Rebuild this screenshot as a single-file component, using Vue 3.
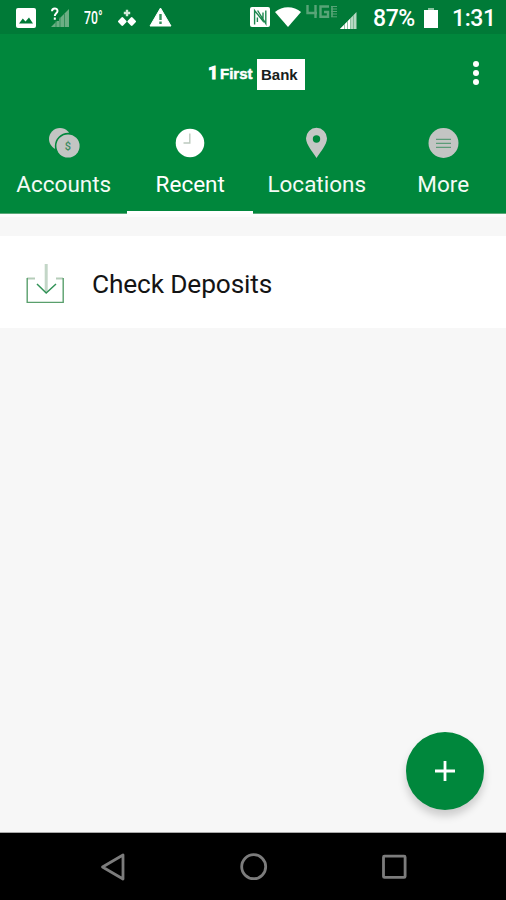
<script setup>
import { ref } from 'vue'

const tabs = [
  { id: 'accounts', label: 'Accounts' },
  { id: 'recent', label: 'Recent' },
  { id: 'locations', label: 'Locations' },
  { id: 'more', label: 'More' },
]
const active = ref('recent')
</script>

<template>
  <div class="screen">
    <div class="status">
      <div class="group">
        <svg class="picture" width="20" height="20" viewBox="0 0 20 20">
          <rect width="20" height="20" rx="2" fill="#fff" />
          <path d="M3 15.5 6.8 10.5 9.5 13.5 13 9.5 17 15.5Z" fill="#007a37" />
        </svg>
        <svg class="unknown-signal" width="20" height="21" viewBox="0 0 20 21">
          <path d="M19 2V20H1Z" fill="#6cae84" />
          <path d="M0 0H9V14H0Z" fill="#007a37" />
          <path d="M6 14V20M10 10V20M14.5 6V20" stroke="#338f5a" stroke-width="1" />
          <path d="M2 4.2C2.1 .6 7.5 .6 7.5 4C7.5 6.2 4.8 6.4 4.8 9M4.8 10.5V12.7" fill="none" stroke="#fff" stroke-width="2" />
        </svg>
        <span class="temp">70°</span>
        <svg class="clover" width="18" height="18" viewBox="0 0 18 18">
          <path d="M9 .8V7.2M5.8 4H12.2" stroke="#d4eadb" stroke-width="2.4" />
          <path d="M4.3 9.3 7.4 12.5 4.3 15.7 1.2 12.5ZM13.7 9.3 16.8 12.5 13.7 15.7 10.6 12.5Z" fill="#fff" stroke="#fff" stroke-width="2.4" stroke-linejoin="round" />
        </svg>
        <svg class="warning" width="23" height="20" viewBox="0 0 23 20">
          <path d="M11.5 1 22 19H1Z" fill="#fff" stroke="#fff" stroke-width="1" stroke-linejoin="round" />
          <path d="M11.5 7V13M11.5 14.5V17" stroke="#2f8f58" stroke-width="2.4" />
        </svg>
      </div>
      <div class="group">
        <svg class="nfc" width="20" height="20" viewBox="0 0 20 20">
          <rect width="20" height="20" rx="2" fill="#fff" />
          <path d="M4.6 17.5V3.5L13 14V5.5M7.4 15V10.5M7.6 3.5 15.8 16.5V3.5" fill="none" stroke="#1d8850" stroke-width="1.4" />
        </svg>
        <svg class="wifi" width="26" height="20" viewBox="0 0 26 20">
          <path d="M0 5C7-1.5 19-1.5 26 5L13 20Z" fill="#fff" />
        </svg>
        <svg class="network" width="33" height="14" viewBox="0 0 33 14">
          <g fill="none" stroke="#58a477" stroke-width="2.4">
            <path d="M1.5 0V8H11M9.5 0V13M23 1.5H14.5V11.8H22V7H18" />
            <path d="M25 1.5H31M25 4H31M25 6.5H31M25 9H31M25 11.8H31" stroke-width="1" />
            <path d="M26 1V12" stroke-width="1.6" />
          </g>
        </svg>
        <svg class="signal" width="17" height="17" viewBox="0 0 17 17">
          <path d="M16.5 0V17H0Z" fill="#b6d8c2" />
          <path d="M0 17 11 6V17Z" fill="#fff" />
          <path d="M4.5 12V17M7.5 9V17M10.5 6V17M13.5 3V17" stroke="#72b28a" stroke-width=".8" />
        </svg>
        <span class="battery-text">87%</span>
        <svg class="battery" width="14" height="20" viewBox="0 0 14 20">
          <path d="M0 2H14V20H0Z" fill="#fff" />
          <path d="M4 0H10V2H4Z" fill="#8bc3a0" />
        </svg>
        <span class="clock">1:31</span>
      </div>
    </div>

    <header class="header">
      <div class="logo">
        <span class="numeral">1</span><span class="first">First</span><span class="bank">Bank</span>
      </div>
      <button class="menu" aria-label="Menu"><i></i><i></i><i></i></button>
    </header>

    <nav class="tabs">
      <button
        v-for="tab in tabs"
        :key="tab.id"
        class="tab"
        :class="{ active: tab.id === active }"
        @click="active = tab.id"
      >
        <svg class="tab-icon" width="32" height="32" viewBox="0 0 32 32">
          <template v-if="tab.id === 'accounts'">
            <circle cx="12" cy="12" r="11" fill="#c3c5c3" />
            <circle cx="20" cy="19" r="13.2" fill="#00873c" />
            <circle cx="20" cy="19" r="11.6" fill="#c3c5c3" />
            <text x="20" y="23" text-anchor="middle" class="dollar">$</text>
          </template>
          <template v-else-if="tab.id === 'recent'">
            <circle cx="16" cy="16" r="14.3" fill="#fff" />
            <path d="M15.8 6.5V16H9.5" fill="none" stroke="#bcc9be" stroke-width="1.4" />
          </template>
          <template v-else-if="tab.id === 'locations'">
            <path d="M15.5 31C12.5 26 5 18 5 11.3A10.5 10.5 0 0 1 26 11.3C26 18 18.5 26 15.5 31Z" fill="#c5c7c5" />
            <circle cx="15.5" cy="12" r="3.7" fill="#00873c" />
          </template>
          <template v-else>
            <circle cx="16.5" cy="16" r="15" fill="#c3c5c3" />
            <path d="M9 12.3H24M9 16.3H24M9 20.3H24" stroke="#5c9c78" stroke-width="1.2" />
          </template>
        </svg>
        <span>{{ tab.label }}</span>
      </button>
    </nav>

    <main class="content">
      <div class="row">
        <svg class="deposit" width="38" height="42" viewBox="0 0 38 42">
          <g fill="none">
            <path d="M1 15.5H9M30 15.5H37" stroke="#b5cdb9" stroke-width="2" />
            <path d="M20.2 1V29" stroke="#c3d6c7" stroke-width="3" />
            <path d="M1.2 15V39.4H37.2V15" stroke="#599f6c" stroke-width="1.4" />
            <path d="M11 21 20.2 30 30 21" stroke="#329257" stroke-width="1.5" />
          </g>
        </svg>
        <span>Check Deposits</span>
      </div>
      <button class="fab" aria-label="Add">
        <svg width="22" height="22" viewBox="0 0 22 22">
          <path d="M11 1V21M1 11H21" stroke="#fff" stroke-width="2.8" />
        </svg>
      </button>
    </main>

    <div class="navbar">
      <svg width="28" height="30" viewBox="0 0 28 30"><path d="M24 3V27L3.5 15Z" /></svg>
      <svg width="28" height="30" viewBox="0 0 28 30"><circle cx="13.7" cy="14.7" r="12" /></svg>
      <svg width="28" height="30" viewBox="0 0 28 30"><rect x="3.5" y="4.2" width="21.6" height="21.2" rx="1" /></svg>
    </div>
  </div>
</template>

<style>
body {
  margin: 0;
}
</style>

<style scoped>
.screen {
  width: 506px;
  height: 900px;
  display: flex;
  flex-direction: column;
  background: #f7f7f7;
  font-family: Roboto, "Liberation Sans", sans-serif;
  overflow: hidden;
}
button {
  border: 0;
  padding: 0;
  background: none;
  font: inherit;
  color: inherit;
}
svg {
  display: block;
  flex: none;
}
.status {
  height: 34px;
  flex: none;
  display: flex;
  justify-content: space-between;
  background: #007a37;
  color: #fff;
  padding: 0 11px 0 16px;
}
.group {
  display: flex;
  align-items: flex-start;
}
.picture { margin-top: 8px; }
.unknown-signal { margin: 7px 0 0 14px; }
.temp {
  width: 20px;
  margin: 8px 0 0 14px;
  font-size: 18.5px;
  line-height: 20px;
  font-weight: 500;
  white-space: nowrap;
  transform: scaleX(.66);
  transform-origin: left;
}
.clover { margin: 9px 0 0 14px; }
.warning { margin: 7px 0 0 13px; }
.nfc { margin-top: 7px; }
.wifi { margin: 7px 0 0 5px; }
.network { margin: 5px 0 0 5px; }
.signal { margin: 12px 0 0 1px; }
.battery-text,
.clock {
  font-size: 23px;
  line-height: 26px;
  font-weight: 500;
  margin-top: 6px;
  white-space: nowrap;
  letter-spacing: -.4px;
}
.battery-text {
  width: 42px;
  margin-left: 16px;
}
.battery { margin: 8px 0 0 9px; }
.clock {
  width: 43px;
  margin-left: 14px;
}
.header {
  height: 82px;
  flex: none;
  display: grid;
  grid-template-columns: 1fr 96px 1fr;
  background: #00873c;
  color: #fff;
}
.logo {
  grid-column: 2;
  display: flex;
  height: 32px;
  margin: 24px -4px 0 3px;
  align-items: center;
  font-family: "Liberation Sans", Arial, sans-serif;
  font-weight: 700;
  font-size: 15px;
}
.numeral {
  width: 12px;
  font-family: Roboto, sans-serif;
  font-size: 18px;
  line-height: 20px;
  margin-top: -2px;
  -webkit-text-stroke: .9px #fff;
}
.first {
  width: 37px;
  margin-top: -1px;
  -webkit-text-stroke: .5px #fff;
}
.bank {
  width: 44px;
  height: 31px;
  padding-left: 4px;
  line-height: 31px;
  background: #fff;
  color: #17201b;
}
.menu {
  justify-self: end;
  width: 8px;
  height: 25px;
  margin: 27px 25px 0 0;
  display: flex;
  flex-direction: column;
  gap: 2.4px;
}
.menu i {
  width: 6.4px;
  height: 6.4px;
  border-radius: 50%;
  background: #fff;
}
.tabs {
  height: 98px;
  flex: none;
  display: grid;
  grid-template-columns: repeat(4, 1fr);
  background: #00873c;
  color: #f3fbf5;
  border-bottom: 3px solid #fcfcfc;
  box-shadow: inset 0 -1px 0 rgba(150, 190, 160, .6);
}
.tab {
  display: flex;
  flex-direction: column;
  align-items: center;
  padding: 11px 0 0 1px;
  font-size: 22.5px;
  line-height: 28px;
  border-bottom: 3px solid transparent;
}
.tab span {
  margin-top: 11px;
}
.tab.active {
  color: #fff;
  border-bottom-color: #fff;
}
.dollar {
  font: 500 11px Roboto, sans-serif;
  fill: #3d8a60;
}
.content {
  flex: 1;
  display: flex;
  flex-direction: column;
  padding-top: 19px;
  border-bottom: 1px solid #a9a9a9;
}
.row {
  height: 92px;
  display: flex;
  align-items: center;
  gap: 28px;
  padding-left: 26px;
  background: #fff;
  color: #141414;
  font-size: 26.3px;
  letter-spacing: -.15px;
}
.deposit {
  margin-top: 4px;
}
.row span {
  margin-top: 4px;
}
.fab {
  width: 78px;
  height: 78px;
  margin: auto 22px 22px auto;
  border-radius: 50%;
  display: flex;
  align-items: center;
  justify-content: center;
  background: #00873c;
  box-shadow: 0 6px 9px rgba(0, 0, 0, .18);
}
.navbar {
  height: 67px;
  flex: none;
  display: flex;
  justify-content: space-between;
  align-items: center;
  padding: 0 98px 0 99px;
  box-sizing: border-box;
  background: #000;
}
.navbar svg {
  fill: none;
  stroke: #7c7c7c;
  stroke-width: 2.8;
  stroke-linejoin: round;
}
</style>
